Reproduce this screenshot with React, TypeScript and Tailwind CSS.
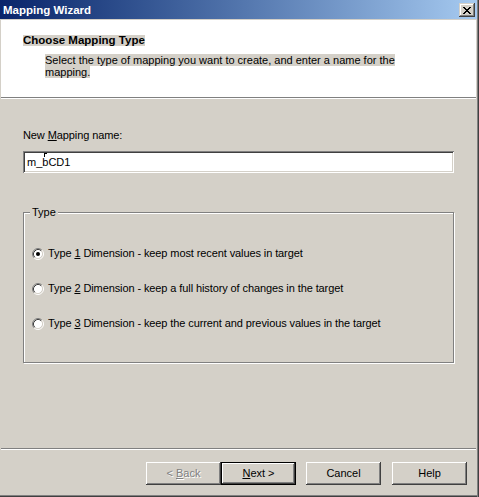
import React from "react";

function Radio({ checked }: { checked?: boolean }) {
  return (
    <svg width="12" height="12" viewBox="0 0 12 12" className="shrink-0">
      <circle cx="6" cy="6" r="4.5" fill="#ffffff" />
      <path d="M2.11 9.89 A5.5 5.5 0 0 1 9.89 2.11" fill="none" stroke="#808080" strokeWidth="1" />
      <path d="M9.89 2.11 A5.5 5.5 0 0 1 2.11 9.89" fill="none" stroke="#ffffff" strokeWidth="1" />
      <path d="M2.82 9.18 A4.5 4.5 0 0 1 9.18 2.82" fill="none" stroke="#404040" strokeWidth="1" />
      <path d="M9.18 2.82 A4.5 4.5 0 0 1 2.82 9.18" fill="none" stroke="#d4d0c8" strokeWidth="1" />
      {checked && <circle cx="6" cy="6" r="2" fill="#000000" />}
    </svg>
  );
}

function CloseGlyph() {
  const px: [number, number][] = [
    [0, 0], [1, 0], [6, 0], [7, 0],
    [1, 1], [2, 1], [5, 1], [6, 1],
    [2, 2], [3, 2], [4, 2], [5, 2],
    [3, 3], [4, 3],
    [2, 4], [3, 4], [4, 4], [5, 4],
    [1, 5], [2, 5], [5, 5], [6, 5],
    [0, 6], [1, 6], [6, 6], [7, 6],
  ];
  return (
    <svg width="8" height="7" viewBox="0 0 8 7" shapeRendering="crispEdges">
      {px.map(([x, y]) => (
        <rect key={`${x}-${y}`} x={x} y={y} width="1" height="1" fill="#000" />
      ))}
    </svg>
  );
}

const raised =
  "shadow-[inset_-1px_-1px_#404040,inset_1px_1px_#ffffff,inset_-2px_-2px_#808080]";

export default function App() {
  return (
    <div className="w-[479px] h-[497px] flex flex-row bg-[#d4d0c8] font-['Liberation_Sans',Arial,sans-serif] text-[11px] text-black overflow-hidden">
      <div className="w-[477px] flex flex-col">
        {/* Title bar */}
        <div className="h-[19px] flex flex-row justify-between items-start bg-linear-to-r from-[#0a246a] to-[#a6caf0] pl-[3px] pr-[2px]">
          <div className="mt-[4px] leading-[13px] text-[11.5px] font-bold text-white">Mapping Wizard</div>
          <div className="mt-[3px] w-[16px] h-[14px] flex items-center justify-center bg-[#d4d0c8] shadow-[inset_-1px_-1px_#404040,inset_1px_1px_#d4d0c8,inset_-2px_-2px_#808080,inset_2px_2px_#ffffff]">
            <CloseGlyph />
          </div>
        </div>

        {/* Client */}
        <div className="flex-1 flex flex-col px-px pt-px">
          {/* Header */}
          <div className="h-[77px] bg-white pl-[22px] pt-[12px]">
            <div className="inline-block bg-[#d4d0c8] font-bold text-[11.5px] leading-[11px]">Choose Mapping Type</div>
            <div className="ml-[22px] mt-[5px] w-[385px] leading-[12px]">
              <span className="bg-[#d4d0c8]">
                Select the type of mapping you want to create, and enter a name for the mapping.
              </span>
            </div>
          </div>
          <div className="h-px bg-[#808080]" />
          <div className="h-px bg-white" />

          {/* Body */}
          <div className="flex-1 flex flex-col px-[22px] pt-[30px]">
            <div className="leading-[13px] tracking-[-0.1px]">
              New <u>M</u>apping name:
            </div>
            <div className="relative mt-[9px] w-[431px] h-[22px] bg-white flex items-center pl-[4px] shadow-[inset_1px_1px_#808080,inset_-1px_-1px_#ffffff,inset_2px_2px_#404040,inset_-2px_-2px_#d4d0c8]">
              <span className="leading-[13px]">m_bCD1</span>
              <div className="absolute left-[21px] top-[2px] w-px h-[4px] bg-black" />
              <div className="absolute left-[21px] top-[2px] w-[3px] h-px bg-black" />
            </div>

            <div className="relative mt-[39px] w-[431px] h-[151px] border border-[#808080] shadow-[1px_1px_0_#ffffff,inset_1px_1px_0_#ffffff] pl-[8px] pt-[34px]">
              <div className="absolute left-[6px] -top-[7px] px-[2px] bg-[#d4d0c8] leading-[13px]">Type</div>
              <div className="flex flex-col gap-[22px] tracking-[-0.1px]">
                <div className="flex flex-row items-center gap-[4px] h-[13px]">
                  <Radio checked />
                  <span className="leading-[13px]">
                    Type <u>1</u> Dimension - keep most recent values in target
                  </span>
                </div>
                <div className="flex flex-row items-center gap-[4px] h-[13px]">
                  <Radio />
                  <span className="leading-[13px]">
                    Type <u>2</u> Dimension - keep a full history of changes in the target
                  </span>
                </div>
                <div className="flex flex-row items-center gap-[4px] h-[13px]">
                  <Radio />
                  <span className="leading-[13px]">
                    Type <u>3</u> Dimension - keep the current and previous values in the target
                  </span>
                </div>
              </div>
            </div>
          </div>

          <div className="h-px bg-[#808080]" />
          <div className="h-px bg-white" />

          {/* Footer */}
          <div className="h-[45px] flex flex-row justify-end items-start pt-[12px] pr-[9px]">
            <button className={`w-[75px] h-[23px] flex items-center justify-center bg-[#d4d0c8] text-[#808080] [text-shadow:1px_1px_0_#ffffff] ${raised}`}>
              &lt; <u className="ml-[3px]">B</u>ack
            </button>
            <button className={`w-[75px] h-[23px] flex items-center justify-center bg-[#d4d0c8] border border-black ${raised}`}>
              <u>N</u>ext &gt;
            </button>
            <button className={`ml-[10px] w-[75px] h-[23px] flex items-center justify-center bg-[#d4d0c8] ${raised}`}>
              Cancel
            </button>
            <button className={`ml-[11px] w-[75px] h-[23px] flex items-center justify-center bg-[#d4d0c8] ${raised}`}>
              Help
            </button>
          </div>
          <div className="h-px bg-[#808080] -mx-px" />
          <div className="h-px bg-[#404040] -mx-px" />
        </div>
      </div>
      <div className="w-px bg-[#808080]" />
      <div className="w-px bg-[#404040]" />
    </div>
  );
}
